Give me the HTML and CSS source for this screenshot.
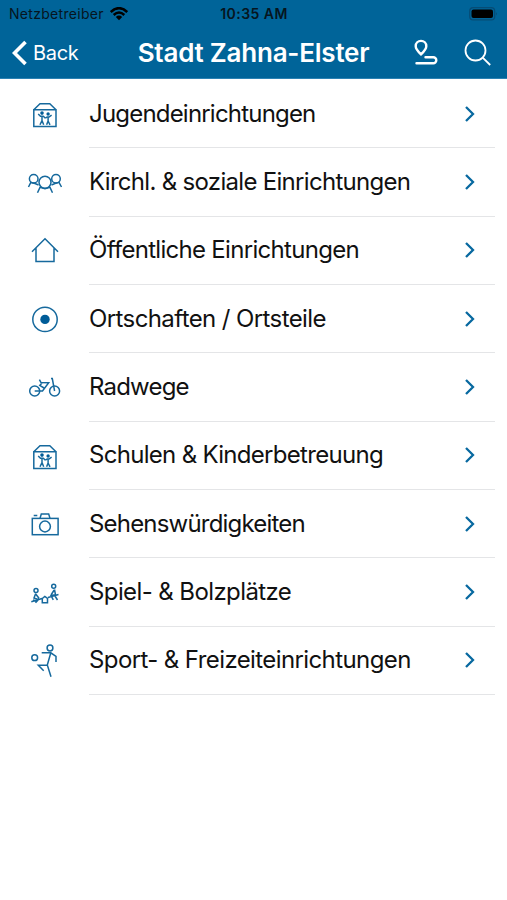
FILE: index.html
```html
<!DOCTYPE html>
<html lang="de">
<head>
<meta charset="utf-8">
<title>Stadt Zahna-Elster</title>
<link rel="stylesheet" href="styles.css">
</head>
<body>
<svg class="defs" width="0" height="0">
<defs>
<symbol id="kids" viewBox="0 0 48 48"><path d="M12.8 20.7H35V37.5H12.8ZM12.8 20.7L19 14.7H28.8L35 20.7"/><circle class="solid" cx="21" cy="24.1" r="1.8"/><circle class="solid" cx="27.1" cy="25" r="1.7"/><path d="M17.2 25L19.5 27.3H22.3L24.4 29.2M21 27V31.5L19 35.8M21 31.5L22.7 35.8M24.4 29.2L26.2 28H28L30.6 26.2M27.1 28V32L25.6 35.8M27.1 32L29 35.8"/></symbol>
<symbol id="chevron" viewBox="0 0 14 20"><path d="M3 3L10 10L3 17"/></symbol>
</defs>
</svg>
<header class="header">
<div class="status">
<div class="carrier"><span class="carrier-name">Netzbetreiber</span>
<svg class="wifi" viewBox="0 0 18 14"><path d="M.8 5Q9-2.7 17.2 5M3.7 8Q9 3 14.3 8"/><path class="solid" d="M5.8 10Q9 7.2 12.2 10L9 13.2Z"/></svg></div>
<span class="time">10:35 AM</span>
<svg class="battery" viewBox="0 0 30 14"><rect class="shell" x=".7" y=".7" width="25" height="12.2" rx="3.5"/><rect x="2.5" y="2.5" width="21.5" height="8.6" rx="2"/><path class="cap" d="M27.2 5Q29 6.8 27.2 8.6Z"/></svg>
</div>
<nav class="nav">
<a class="back"><svg class="back-icon" viewBox="0 0 16 26"><path d="M13.5 2L2.5 13L13.5 24"/></svg><span class="back-label">Back</span></a>
<h1 class="title"><span>Stadt Zahna-Elster</span></h1>
<div class="actions">
<svg class="route" viewBox="0 0 26 28"><path d="M8 15.4Q2.7 10.2 2.7 7.2A5.3 5.3 0 0 1 13.3 7.2Q13.3 10.2 8 15.4ZM12.5 18.3H20.3A2.9 2.9 0 0 1 20.3 24.3H3.5"/></svg>
<svg class="search" viewBox="0 0 28 28"><circle cx="11.5" cy="11.5" r="10"/><path d="M18.7 18.7L26.2 26"/></svg>
</div>
</nav>
</header>
<main class="list">
<div class="row"><svg class="icon"><use href="#kids"/></svg><div class="cell"><span class="label tightest">Jugendeinrichtungen</span><svg class="chevron"><use href="#chevron"/></svg></div></div>
<div class="row"><svg class="icon" viewBox="0 0 48 48"><circle cx="24" cy="24.2" r="6"/><circle cx="12.7" cy="20.7" r="4.3"/><circle cx="35" cy="20.7" r="4.3"/><path d="M7.5 29L9.8 24.4L14 25.5L17.5 27M40.5 29L38 24.4L34 25.5L30.5 27M16.5 34.7L19 29.4L24 30.8L29 29.4L31.5 34.7"/></svg><div class="cell"><span class="label">Kirchl. &amp; soziale Einrichtungen</span><svg class="chevron"><use href="#chevron"/></svg></div></div>
<div class="row"><svg class="icon" viewBox="0 0 48 48"><path d="M11 25.8L24 12.8L37 25.8M15 22V35.6H33V22"/></svg><div class="cell"><span class="label">Öffentliche Einrichtungen</span><svg class="chevron"><use href="#chevron"/></svg></div></div>
<div class="row"><svg class="icon" viewBox="0 0 48 48"><circle cx="24" cy="24.4" r="12.2"/><circle class="solid" cx="24" cy="24.4" r="4.7"/></svg><div class="cell"><span class="label loose">Ortschaften / Ortsteile</span><svg class="chevron"><use href="#chevron"/></svg></div></div>
<div class="row"><svg class="icon" viewBox="0 0 48 48"><circle cx="13.7" cy="28" r="5"/><circle cx="33.6" cy="28" r="5"/><path d="M13.7 28H21.5L27.7 19.7L20 19.5L18.4 16.6M21 20L18.8 22.4L23 25M30 15.6H31.3L33.6 28"/></svg><div class="cell"><span class="label tightest">Radwege</span><svg class="chevron"><use href="#chevron"/></svg></div></div>
<div class="row"><svg class="icon"><use href="#kids"/></svg><div class="cell"><span class="label">Schulen &amp; Kinderbetreuung</span><svg class="chevron"><use href="#chevron"/></svg></div></div>
<div class="row"><svg class="icon" viewBox="0 0 48 48"><rect x="11.3" y="18.4" width="25.8" height="16.3"/><circle cx="24" cy="26.5" r="5.4"/><path d="M19 18.4L20.3 14H27.7L29 18.4M12.7 15.4H16.3"/></svg><div class="cell"><span class="label tightest">Sehenswürdigkeiten</span><svg class="chevron"><use href="#chevron"/></svg></div></div>
<div class="row"><svg class="icon" viewBox="0 0 48 48"><circle cx="15" cy="22.6" r="2"/><circle cx="32.7" cy="18.3" r="2"/><path d="M14.7 25.5L13 30L17.5 31.5L14.5 34.7M14.7 26L18 30.3M10.3 33.8L21 30.5M27 29.5L37.5 26.5M12 32L15 33M21.3 34.8V30.5L23.8 28.5L26.5 30.5V34.8ZM33.5 21.5L34.5 26.8L30 27.5L32.3 31.8M33.2 22L30 27M34 28L36.5 32"/></svg><div class="cell"><span class="label loose">Spiel- &amp; Bolzplätze</span><svg class="chevron"><use href="#chevron"/></svg></div></div>
<div class="row"><svg class="icon" viewBox="0 0 48 48"><circle cx="13.7" cy="21.7" r="2.9"/><circle cx="29" cy="12" r="2.9"/><path d="M20.7 16.8H29.8L35 20.3V26M29.8 16.8L26.3 29L30 40.7M26.3 29.2H17.3L22.7 34.7"/></svg><div class="cell"><span class="label loose">Sport- &amp; Freizeiteinrichtungen</span><svg class="chevron"><use href="#chevron"/></svg></div></div>
</main>
</body>
</html>
```
FILE: styles.css
```css
* { box-sizing: border-box; }
body { margin: 0; height: 900px; overflow: hidden; background: #fff; color: #111; font-family: Inter, "Liberation Sans", sans-serif; }
svg { display: block; flex: none; fill: none; stroke: currentColor; }
.defs { position: absolute; }
.header { height: 79px; background: #006499; border-bottom: 1px solid #2b82b4; }
.status { display: grid; grid-template-columns: 1fr auto 1fr; align-items: center; height: 27px; padding: 0 8px 0 9px; color: #061520; font-size: 14px; }
.carrier { display: flex; align-items: center; gap: 6px; }
.carrier-name { letter-spacing: .3px; }
.time { font-weight: 600; letter-spacing: .45px; }
.wifi { width: 18px; height: 14px; stroke-width: 2.5; color: #000; }
.wifi .solid { fill: currentColor; stroke: none; }
.battery { width: 30px; height: 14px; justify-self: end; fill: #000; stroke: none; }
.battery .shell { fill: none; stroke: #064c75; stroke-width: 1.2; }
.battery .cap { fill: #064c75; }
.nav { display: grid; grid-template-columns: 1fr auto 1fr; align-items: center; height: 51px; padding: 0 15px 0 12px; color: #fff; }
.back { display: flex; align-items: center; gap: 5px; font-size: 20px; letter-spacing: -.3px; }
.back-icon { width: 16px; height: 26px; stroke-width: 3.6; }
.title { margin: 0; padding-left: 3px; font-size: 26px; font-weight: 600; line-height: 30px; white-space: nowrap; letter-spacing: -.22px; }
.actions { display: flex; justify-content: flex-end; align-items: center; gap: 25px; }
.route { width: 26px; height: 28px; stroke-width: 2.4; stroke-linecap: round; }
.search { width: 28px; height: 28px; stroke-width: 1.8; }
.list { display: grid; grid-auto-rows: 68.37px; padding-top: .9px; }
.row { display: flex; padding: 0 12px 0 21px; }
.icon { width: 48px; height: 48px; margin-top: 9.6px; color: #16699d; stroke-width: 1.5; }
.icon .solid, #kids .solid { fill: #005c98; stroke: none; }
.cell { display: flex; flex: 1; justify-content: space-between; align-items: center; margin-left: 20px; padding-right: 18px; border-bottom: 1px solid #e4e5e7; }
.label { font-size: 24px; line-height: 30px; white-space: nowrap; letter-spacing: -.7px; }
.label.loose { letter-spacing: -.6px; }
.label.tightest { letter-spacing: -.8px; }
.chevron { width: 14px; height: 20px; color: #0869a0; stroke-width: 2.3; }
```
